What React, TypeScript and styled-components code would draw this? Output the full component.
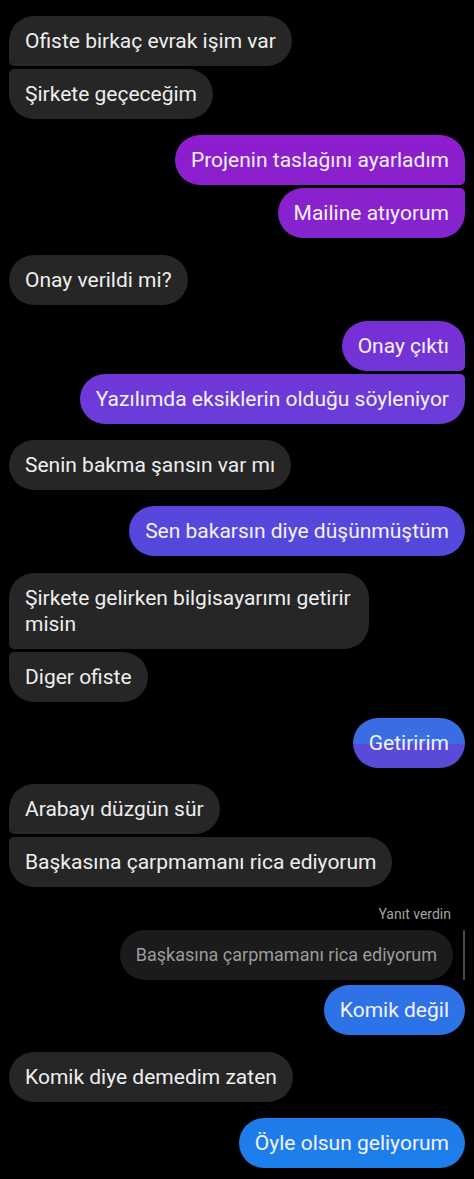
import styled, { createGlobalStyle, css } from "styled-components";

const GlobalStyle = createGlobalStyle`
  html, body {
    margin: 0;
    padding: 0;
    background: #000;
  }
  body {
    font-family: Roboto, "Noto Sans", "Liberation Sans", sans-serif;
    -webkit-font-smoothing: antialiased;
  }
`

const SENT_GRADIENT = `linear-gradient(to bottom,
  #9516d0 0px,
  #8a20cd 200px,
  #7432d6 350px,
  #6640da 440px,
  #5448dc 540px,
  #4a57de 700px,
  #3a68e2 850px,
  #2d72e6 1010px,
  #1a80ec 1179px)`

const Thread = styled.div`
  display: flex;
  flex-direction: column;
  gap: 16.25px;
  padding: 16px 9px 10px 9px;
  min-height: 1179px;
  box-sizing: border-box;
`

const Group = styled.div<{ $mine?: boolean }>`
  display: flex;
  flex-direction: column;
  align-items: ${p => p.$mine ? "flex-end" : "flex-start"};
  gap: 3px;
`

type Pos = "single" | "first" | "middle" | "last";

const radius = (mine: boolean, pos: Pos) => {
  const big = "25px";
  const small = "5px";
  const top = pos === "single" || pos === "first" ? big : small;
  const bottom = pos === "single" || pos === "last" ? big : small;
  return mine
    ? `${big} ${top} ${bottom} ${big}`
    : `${top} ${big} ${big} ${bottom}`;
}

const Bubble = styled.div<{ $mine?: boolean; $pos: Pos; $split?: boolean; $max?: number }>`
  box-sizing: border-box;
  max-width: ${p => p.$max ? `${p.$max}px` : "400px"};
  padding: 12px 16px;
  font-size: 21px;
  line-height: 26px;
  color: #eeeeee;
  border-radius: ${p => radius(!!p.$mine, p.$pos)};
  background: #262626;
  ${p => p.$mine && css`
    color: #f4f2ff;
    background: ${SENT_GRADIENT};
    background-attachment: fixed;
  `}
  ${p => p.$split && css`
    background: linear-gradient(to bottom, #3a6de2 0%, #3a6de2 52%, #5a4ad8 52%, #5a4ad8 100%);
  `}
`

const ReplyBlock = styled.div`
  display: flex;
  flex-direction: column;
  align-items: flex-end;
  gap: 5px;
  margin-top: 2px;
`

const ReplyLabel = styled.div`
  font-size: 14px;
  line-height: 18px;
  color: #a3a3a3;
  padding-right: 14px;
  margin-bottom: 2px;
`

const ReplyRow = styled.div`
  display: flex;
  align-items: stretch;
  gap: 10px;
`

const QuotedBubble = styled.div`
  padding: 12px 16px;
  font-size: 18px;
  line-height: 26px;
  color: #9c9c9c;
  background: #1b1b1b;
  border-radius: 25px;
`

const QuoteBar = styled.div`
  width: 2px;
  background: #4a4a4a;
  border-radius: 1px;
`

type Msg = { text: string; split?: boolean; max?: number };

const posOf = (i: number, n: number): Pos =>
  n === 1 ? "single" : i === 0 ? "first" : i === n - 1 ? "last" : "middle";

const MessageGroup = ({ mine, items }: { mine?: boolean; items: Msg[] }) => (
  <Group $mine={mine}>
    {items.map((m, i) => (
      <Bubble key={i} $mine={mine} $pos={posOf(i, items.length)} $split={m.split} $max={m.max}>
        {m.text}
      </Bubble>
    ))}
  </Group>
)

export default function App() {
  return (
    <>
      <GlobalStyle />
      <Thread>
        <MessageGroup items={[{ text: "Ofiste birkaç evrak işim var" }, { text: "Şirkete geçeceğim" }]} />
        <MessageGroup mine items={[{ text: "Projenin taslağını ayarladım" }, { text: "Mailine atıyorum" }]} />
        <MessageGroup items={[{ text: "Onay verildi mi?" }]} />
        <MessageGroup mine items={[{ text: "Onay çıktı" }, { text: "Yazılımda eksiklerin olduğu söyleniyor" }]} />
        <MessageGroup items={[{ text: "Senin bakma şansın var mı" }]} />
        <MessageGroup mine items={[{ text: "Sen bakarsın diye düşünmüştüm" }]} />
        <MessageGroup items={[{ text: "Şirkete gelirken bilgisayarımı getirir misin", max: 360 }, { text: "Diger ofiste" }]} />
        <MessageGroup mine items={[{ text: "Getiririm", split: true }]} />
        <MessageGroup items={[{ text: "Arabayı düzgün sür" }, { text: "Başkasına çarpmamanı rica ediyorum" }]} />
        <ReplyBlock>
          <ReplyLabel>Yanıt verdin</ReplyLabel>
          <ReplyRow>
            <QuotedBubble>Başkasına çarpmamanı rica ediyorum</QuotedBubble>
            <QuoteBar />
          </ReplyRow>
          <Bubble $mine $pos="single">Komik değil</Bubble>
        </ReplyBlock>
        <MessageGroup items={[{ text: "Komik diye demedim zaten" }]} />
        <MessageGroup mine items={[{ text: "Öyle olsun geliyorum" }]} />
      </Thread>
    </>
  )
}
